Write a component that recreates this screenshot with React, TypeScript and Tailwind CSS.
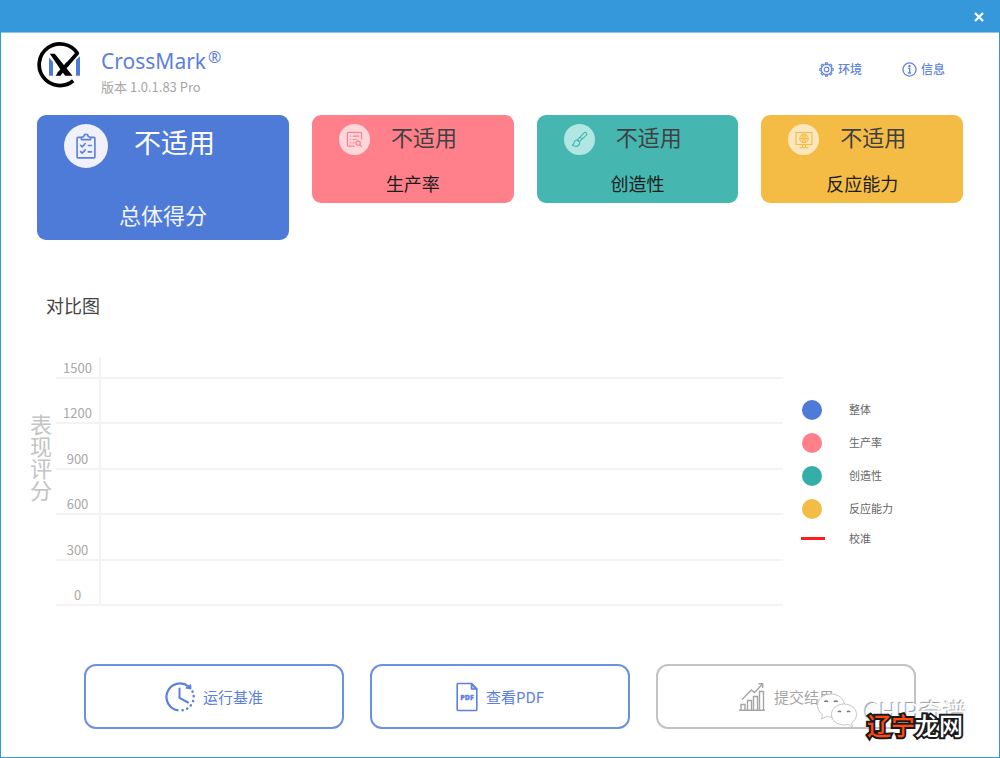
import React from "react";

type Card = { label: string; box: string; badge: string; ink: string; icon: React.ReactNode };

const ClipboardIcon = () => (
  <svg viewBox="0 0 22 28" className="h-[26px] w-5" fill="none" stroke="currentColor" strokeWidth="1.800" strokeLinejoin="round" strokeLinecap="round" aria-hidden="true">
    <path d="M6 4.5H2.2A1 1 0 0 0 1.2 5.500V26a1 1 0 0 0 1 1h17.600a1 1 0 0 0 1-1V5.500a1 1 0 0 0-1-1H16" />
    <path d="M6 7V4.600l2.600-1A2.400 2.400 0 0 1 11 1.200a2.400 2.400 0 0 1 2.400 2.400l2.600 1V7z" />
    <path d="M5 13.200l1.800 1.700 3.400-3.600M13.500 13.500H17M5 20.200l1.800 1.700 3.400-3.600M13.500 20.500H17" />
  </svg>
);

const ReportIcon = () => (
  <svg viewBox="0 0 18 18" className="h-[17px] w-[17px]" fill="none" stroke="currentColor" strokeWidth="1.3" aria-hidden="true">
    <path d="M9 16H2.500A1 1 0 0 1 1.500 15V2.500a1 1 0 0 1 1-1h13a1 1 0 0 1 1 1V9" />
    <path d="M4 5.500h1.500M7 5.500h7M4 9h1.500M7 9h4M4 12.500h1.500M7 12.500h2" />
    <circle cx="12.800" cy="12.800" r="2.300" />
    <path d="M14.500 14.500l2.300 2.300" />
  </svg>
);

const BrushIcon = () => (
  <svg viewBox="0 0 18 18" className="h-[17px] w-[17px]" fill="none" stroke="currentColor" strokeWidth="1.200" strokeLinejoin="round" aria-hidden="true">
    <path d="M7 9.200L13.800 2a1.700 1.700 0 0 1 2.500 2.400L9 11.200z" />
    <path d="M9.800 6.500l2 2" />
    <path d="M6.500 9.500c-1.800 0-3 1.200-3.200 3-.1 1.300-.9 2-2 2.400 1.500 1.500 5.200 1.900 6.800.2 1.200-1.300 1.200-2.900.4-4z" />
  </svg>
);

const MonitorIcon = () => (
  <svg viewBox="0 0 18 18" className="h-[18px] w-[18px]" fill="none" stroke="currentColor" strokeWidth="1.100" aria-hidden="true">
    <rect x="1" y="1.500" width="16" height="12" />
    <circle cx="9" cy="7.500" r="4.200" />
    <ellipse cx="9" cy="7.500" rx="1.900" ry="4.200" />
    <path d="M9 3.300v8.400M4.800 7.500h8.400M7.500 13.500v3M10.500 13.500v3M4.500 16.800h9" />
  </svg>
);

const cards: Card[] = [
  { label: "生产率", box: "bg-[#ff808b]", badge: "bg-[#ffd6da]", ink: "text-[#ff808b]", icon: <ReportIcon /> },
  { label: "创造性", box: "bg-[#45b7b0]", badge: "bg-[#b0e7e2]", ink: "text-[#45b7b0]", icon: <BrushIcon /> },
  { label: "反应能力", box: "bg-[#f5bc45]", badge: "bg-[#fbe6bd]", ink: "text-[#f5bc45]", icon: <MonitorIcon /> },
];

const ticks = [1500, 1200, 900, 600, 300, 0];

const legend = [
  { label: "整体", color: "bg-[#4e7ad8]" },
  { label: "生产率", color: "bg-[#ff808b]" },
  { label: "创造性", color: "bg-[#33aea9]" },
  { label: "反应能力", color: "bg-[#f3bc45]" },
];

const Logo = () => (
  <svg viewBox="0 0 46 48" className="h-12 w-[46px] shrink-0" fill="none" aria-hidden="true">
    <path d="M36.200 39.800A20.800 20.800 0 1 1 40.300 12.200L29 25" stroke="#000" strokeWidth="3.700" strokeLinejoin="round" />
    <path d="M12.800 12.800h5L35.500 34.800h-7.300l-2.500-3.200-2.300 3.200h-4.900l5-6.300z" fill="#000" />
    <path d="M31 22.500L21.500 33.500" stroke="#000" strokeWidth="4" />
    <path d="M12 16.500l4 4.500V34.800h-4zM39 18.800l4-3.500v19.500h-4z" fill="#4e7ad8" />
  </svg>
);

const GearIcon = () => {
  const teeth = Array.from({ length: 8 }, (_, i) => i * 45);
  return (
    <svg viewBox="0 0 16 16" className="h-[15px] w-[15px]" fill="none" stroke="currentColor" strokeWidth="1.200" aria-hidden="true">
      {teeth.map((a) => (
        <path key={a} d="M6.500 2.300L7 .9h2l.5 1.400" transform={`rotate(${a} 8 8)`} />
      ))}
      <circle cx="8" cy="8" r="5.500" />
      <circle cx="8" cy="8" r="2.500" />
    </svg>
  );
};

const InfoIcon = () => (
  <svg viewBox="0 0 16 16" className="h-[15px] w-[15px]" fill="none" stroke="currentColor" strokeWidth="1.400" aria-hidden="true">
    <circle cx="8" cy="8" r="7" />
    <path d="M6.500 6.800h1.700v4.700M6.500 11.700h3.200" />
    <circle cx="8" cy="4.400" r=".6" fill="currentColor" />
  </svg>
);

const RunIcon = () => (
  <svg viewBox="0 0 30 30" className="h-[30px] w-[30px]" fill="none" stroke="currentColor" strokeWidth="2.200" aria-hidden="true">
    <path d="M13.500 28.400A13.500 13.500 0 1 1 23.500 4.500" />
    <path d="M20.800 6l4.800-3.500.4 4.500z" fill="currentColor" strokeWidth="1" />
    <path d="M14.500 6.500V16l8.500 4.500" strokeWidth="2" strokeLinecap="round" />
    <path d="M27.500 9.500A13.500 13.500 0 0 1 16 28.500" strokeWidth="2.500" strokeLinecap="round" strokeDasharray="0.200 4.600" />
  </svg>
);

const PdfIcon = () => (
  <svg viewBox="0 0 22 30" className="h-[30px] w-[22px]" fill="none" stroke="currentColor" strokeWidth="1.600" strokeLinejoin="round" aria-hidden="true">
    <path d="M2.500 1.500H15.500L20.800 7V27.500a1 1 0 0 1-1 1H2.200a1 1 0 0 1-1-1V2.500a1 1 0 0 1 1-1z" />
    <path d="M15.500 1.500V7h5.300z" fill="currentColor" fillOpacity=".4" />
    <text x="11" y="18" textAnchor="middle" fontSize="7" fontWeight="800" fill="currentColor" strokeWidth=".3" fontFamily="Open Sans, sans-serif">PDF</text>
  </svg>
);

const ChartIcon = () => (
  <svg viewBox="0 0 28 30" className="h-[30px] w-7" fill="none" stroke="currentColor" strokeWidth="1.400" aria-hidden="true">
    <path d="M1 28.300h26M3 28v-5.500h4V28M9.500 28v-9.500h4V28M15.500 28V14.500h4V28M21.500 28V9.500h4V28" />
    <path d="M4 17.500L13.500 8l3 2.500L24.500 2M20.500 1.700h4.200v4.200" />
  </svg>
);

const WeChatIcon = () => (
  <svg viewBox="0 0 42 36" className="h-9 w-[42px]" aria-hidden="true">
    <g fill="#fff" stroke="#b8b8b8" strokeWidth=".8">
      <path d="M15 1C7 1 1.500 6 1.500 12.500c0 4 2 7 5 9L5.500 26l5-2.500c1.500.4 3 .5 4.500.5 7.500 0 13.500-5 13.500-11.500S22.500 1 15 1z" />
      <path d="M28 11c-7 0-12.500 4.500-12.500 10.500S21 32 28 32c1.500 0 3-.2 4.200-.6l4.300 2.400-1-3.800c3-2 5-5 5-8.500C40.500 15.500 35 11 28 11z" />
    </g>
    <g fill="none" stroke="#777" strokeWidth="1.400">
      <path d="M8.500 9a2 2 0 0 1 3.500 0M18 9a2 2 0 0 1 3.500 0M22 19a2 2 0 0 1 3 0M31 19a2 2 0 0 1 3 0" />
    </g>
  </svg>
);

const actionBase =
  "flex h-[65px] items-center justify-center gap-2 rounded-xl border-2 bg-white text-[15px] leading-5";

export default function App() {
  return (
    <div className="relative flex min-h-screen flex-col border border-[#3498db] bg-white font-['Noto_Sans_CJK_SC',sans-serif]">
      <header className="flex h-8 shrink-0 items-center justify-end border-b border-[#8fc6eb] bg-[#3498db] pr-[15px]">
        <button type="button" aria-label="关闭" className="text-white">
          <svg viewBox="0 0 10 10" className="h-[10px] w-[10px]" stroke="currentColor" strokeWidth="2.200" aria-hidden="true">
            <path d="M1 1l8 8M9 1L1 9" />
          </svg>
        </button>
      </header>

      <main className="px-9">
        <div className="flex items-start pt-2">
          <Logo />
          <div className="ml-[18px] pt-1">
            <h1 className="flex font-['Noto_Sans',sans-serif] text-[21px] leading-8 text-[#5b80de]">
              CrossMark<span className="ml-0.5 text-base leading-6">®</span>
            </h1>
            <p className="text-[13px] leading-5 text-[#a6a6a6]">版本 1.0.1.83 Pro</p>
          </div>
          <nav className="ml-auto flex gap-10 pt-[18px] pr-[18px] text-xs leading-5 font-medium text-[#6085de]">
            <button type="button" className="flex items-center gap-1"><GearIcon />环境</button>
            <button type="button" className="flex items-center gap-1"><InfoIcon />信息</button>
          </nav>
        </div>

        <section className="mt-[18px] grid grid-cols-[5fr_4fr_4fr_4fr] items-start gap-[23px]">
          <article className="flex h-[125px] flex-col justify-between rounded-[9px] bg-[#4e7ad8] pt-[9px] pb-[10px] text-white">
            <div className="flex items-start gap-[26px] pl-[27px]">
              <span className="flex h-11 w-11 items-center justify-center rounded-full bg-[#f0f1fb] text-[#5d82dc]"><ClipboardIcon /></span>
              <strong className="text-[27px] leading-9 font-normal">不适用</strong>
            </div>
            <h2 className="text-center text-[22px] leading-8 text-[#f0f4fd]">总体得分</h2>
          </article>
          {cards.map((c) => (
            <article key={c.label} className={`flex h-[88px] flex-col justify-between rounded-[9px] pt-[9px] pb-2 ${c.box}`}>
              <div className="flex items-start gap-[21px] pl-[27px]">
                <span className={`flex h-[31px] w-[31px] items-center justify-center rounded-full ${c.badge} ${c.ink}`}>{c.icon}</span>
                <strong className="text-[22px] leading-6 font-normal text-[#3f4042]">不适用</strong>
              </div>
              <h2 className="text-center text-lg leading-6 text-[#1c1c1c]">{c.label}</h2>
            </article>
          ))}
        </section>

        <h2 className="mt-[53px] pl-[9px] text-lg leading-6 text-[#444]">对比图</h2>

        <section className="-ml-2 mt-[41px] flex items-start">
          <p className="mt-[54px] w-6 shrink-0 text-center text-[22px] leading-[22px] text-[#c4c4c4]">表现评分</p>
          <div className="ml-[3px] flex h-[248px] flex-1 flex-col">
            {ticks.map((t) => (
              <div key={t} className="flex flex-1 items-end border-b-2 border-[#f3f3f3] first:h-[21px] first:flex-none">
                <span className="w-[43px] text-center text-[13px] leading-[18px] text-[#a8a8a8]">{t}</span>
                <span className="flex-1 self-stretch border-l-2 border-[#f3f3f3]" />
              </div>
            ))}
          </div>
          <ul className="mt-[35px] ml-[18px] w-[162px] shrink-0 text-[11px] text-[#666]">
            {legend.map((l) => (
              <li key={l.label} className="flex h-[33px] items-center gap-[27px] pl-px">
                <span className={`h-5 w-5 rounded-full ${l.color}`} />
                {l.label}
              </li>
            ))}
            <li className="flex h-[27px] items-center gap-6">
              <span className="h-[3px] w-6 bg-[#ff1e1e]" />
              校准
            </li>
          </ul>
        </section>

        <section className="mx-[47px] mt-[58px] mb-7 grid grid-cols-3 gap-[26px]">
          <button type="button" className={`${actionBase} border-[#6c90e2] text-[#5b80de]`}><RunIcon />运行基准</button>
          <button type="button" className={`${actionBase} border-[#6c90e2] text-[#5b80de]`}><PdfIcon />查看PDF</button>
          <button type="button" disabled className={`${actionBase} border-[#c3c3c3] text-[#a5a5a5]`}><ChartIcon />提交结果</button>
        </section>
      </main>

      <div className="pointer-events-none absolute right-8 bottom-4 h-12 w-[151px]">
        <div className="absolute top-0 left-0"><WeChatIcon /></div>
        <span className="absolute top-1 right-0 text-2xl leading-7 whitespace-nowrap text-white [text-shadow:-1px_-1px_1px_#999]">CHIP奇谱</span>
        <span className="absolute right-1 bottom-0 text-2xl leading-8 font-medium whitespace-nowrap text-white [-webkit-text-stroke:4px_#1a1a1a] [paint-order:stroke_fill]">
          <span className="text-[#ff4a12]">辽宁</span>龙网
        </span>
      </div>
    </div>
  );
}
